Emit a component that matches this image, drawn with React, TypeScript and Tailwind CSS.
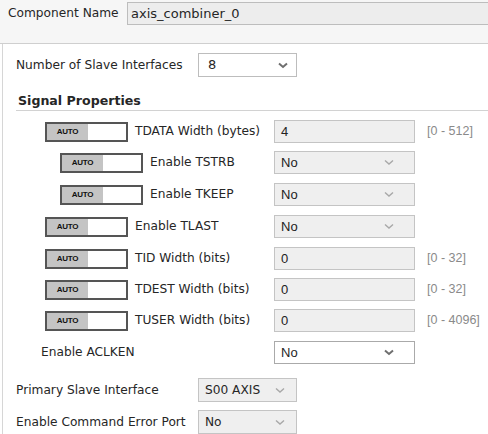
import React from "react";

const sans = "font-['DejaVu_Sans',sans-serif]";
const arial = "font-['Liberation_Sans',Arial,sans-serif]";

function Chevron({ dark }: { dark?: boolean }) {
  return (
    <svg width="10" height="7" viewBox="0 0 10 7" className="shrink-0">
      <path
        d="M1 1.5 L5 5 L9 1.5"
        fill="none"
        stroke={dark ? "#6f6f6f" : "#a8a8a8"}
        strokeWidth={dark ? 2 : 1.4}
      />
    </svg>
  );
}

function Toggle() {
  return (
    <div className="flex h-[20px] w-[83px] shrink-0 border-2 border-[#555] bg-white">
      <div className={`flex w-[41px] items-center justify-center bg-[#c4c4c4] text-[8px] font-bold tracking-[-0.3px] text-[#111] ${arial}`}>
        AUTO
      </div>
    </div>
  );
}

function Field({ value, select }: { value: string; select?: boolean }) {
  return (
    <div
      className={`flex h-[23px] w-[141px] shrink-0 items-center justify-between border border-[#c4c4c4] bg-[#efefef] pl-[6px] pr-[20px] text-[13px] text-[#222] ${arial}`}
    >
      <span>{value}</span>
      {select && <Chevron />}
    </div>
  );
}

type Row = { label: string; indent: number; value: string; select?: boolean; range?: string; mt: number };

const rows: Row[] = [
  { label: "TDATA Width (bytes)", indent: 42, value: "4", range: "[0 - 512]", mt: 9 },
  { label: "Enable TSTRB", indent: 57, value: "No", select: true, mt: 8 },
  { label: "Enable TKEEP", indent: 57, value: "No", select: true, mt: 9 },
  { label: "Enable TLAST", indent: 42, value: "No", select: true, mt: 9 },
  { label: "TID Width (bits)", indent: 42, value: "0", range: "[0 - 32]", mt: 9 },
  { label: "TDEST Width (bits)", indent: 42, value: "0", range: "[0 - 32]", mt: 8 },
  { label: "TUSER Width (bits)", indent: 42, value: "0", range: "[0 - 4096]", mt: 8 },
];

export default function App() {
  return (
    <div className={`h-[434px] w-[488px] overflow-hidden bg-white text-[12.2px] text-[#262626] ${sans}`}>
      {/* component name bar */}
      <div className="h-[44px] border-b border-[#cfcfcf] bg-[#f6f6f6] pt-[2px]">
        <div className="flex items-center">
          <span className="ml-[8px] w-[119px]">Component Name</span>
          <div className="flex h-[23px] flex-1 items-center border border-r-0 border-[#bdbdbd] bg-[#ededed] pl-[3px] text-[13px]">
            axis_combiner_0
          </div>
        </div>
      </div>

      {/* settings panel */}
      <div className="ml-[2px] h-[390px] border-l border-[#d6d6d6] pt-[9px]">
        <div className="flex items-center">
          <span className="ml-[13px] w-[182px]">Number of Slave Interfaces</span>
          <div className="flex h-[24px] w-[99px] items-center justify-between border border-[#bdbdbd] bg-white pl-[9px] pr-[8px] text-[13px]">
            <span>8</span>
            <Chevron dark />
          </div>
        </div>

        <div className="ml-[15px] mt-[16px] text-[12.6px] font-bold leading-[16px]">Signal Properties</div>
        <div className="ml-[13px] mt-[1px] border-t border-[#d2d2d2]" />

        {rows.map((r) => (
          <div key={r.label} className="flex items-center" style={{ marginTop: r.mt }}>
            <div className="flex w-[271px] items-center">
              <div style={{ width: r.indent }} />
              <Toggle />
              <span className="ml-[7px]">{r.label}</span>
            </div>
            <Field value={r.value} select={r.select} />
            {r.range && <span className={`ml-[12px] text-[12.5px] text-[#8a8a8a] ${arial}`}>{r.range}</span>}
          </div>
        ))}

        <div className="mt-[9px] flex items-center">
          <span className="ml-[38px] w-[233px]">Enable ACLKEN</span>
          <div className={`flex h-[23px] w-[141px] items-center justify-between border border-[#aaa] bg-white pl-[6px] pr-[20px] text-[13px] ${arial}`}>
            <span>No</span>
            <Chevron dark />
          </div>
        </div>

        <div className="mt-[14px] flex items-center">
          <span className="ml-[13px] w-[182px]">Primary Slave Interface</span>
          <div className="flex h-[24px] w-[99px] items-center justify-between border border-[#c4c4c4] bg-[#efefef] pl-[6px] pr-[11px] text-[12.2px]">
            <span>S00 AXIS</span>
            <Chevron />
          </div>
        </div>

        <div className="mt-[8px] flex items-center">
          <span className="ml-[13px] w-[182px]">Enable Command Error Port</span>
          <div className="flex h-[24px] w-[99px] items-center justify-between border border-[#c4c4c4] bg-[#efefef] pl-[6px] pr-[11px] text-[12.2px]">
            <span>No</span>
            <Chevron />
          </div>
        </div>
      </div>
    </div>
  );
}
